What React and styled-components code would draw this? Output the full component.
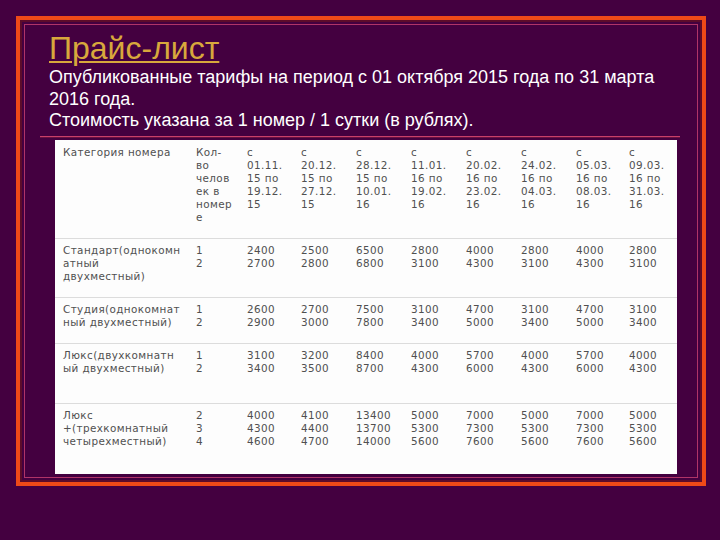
import styled, { createGlobalStyle } from 'styled-components';

const GlobalStyle = createGlobalStyle`
  html, body {
    margin: 0;
    padding: 0;
    background: #440040;
  }
  body {
    width: 720px;
    height: 540px;
    overflow: hidden;
    font-family: "Liberation Sans", Arial, sans-serif;
  }
`;

const Page = styled.div`
  padding: 16px 14px 0 16px;
`;

const Frame = styled.div`
  width: 682px;
  height: 462px;
  border: 4px solid #ee4a18;
`;

const FrameInner = styled.div`
  height: calc(100% - 8px);
  border: 2px solid #5c0c2a;
  padding: 2px;
`;

const FrameLine = styled.div`
  height: calc(100% - 2px);
  border: 1px solid #b03468;
  display: flex;
  flex-direction: column;
`;

const Title = styled.h1`
  margin: 6px 0 0 24px;
  font-size: 32px;
  font-weight: normal;
  line-height: 34px;
  color: #d8a83c;
  text-decoration: underline;
  text-decoration-thickness: 2px;
  text-underline-offset: 2px;
`;

const Intro = styled.p`
  margin: 2px 0 0 24px;
  font-size: 18px;
  line-height: 21.5px;
  color: #ffffff;
`;

const Divider = styled.div`
  margin: 4px 17px 0 15px;
  height: 1px;
  background: #c8406a;
  box-shadow: 0 1px 0 #6a1040;
`;

const Sheet = styled.div`
  margin: 3px 0 0 30px;
  width: 622px;
  height: 334px;
  background: #fdfdfd;
`;

const Table = styled.table`
  border-collapse: collapse;
  table-layout: fixed;
  width: 622px;
  font-family: "DejaVu Sans", "Open Sans", sans-serif;
  font-size: 10.4px;
  letter-spacing: 0.4px;
  color: #505050;
`;

const Cell = styled.td`
  vertical-align: top;
  padding: ${(p) => (p.$head ? '6px 0 0 0' : '5px 0 0 0')};
  padding-left: ${(p) => (p.$first ? '8px' : '0')};
  height: ${(p) => p.$h}px;
  box-sizing: border-box;
  white-space: nowrap;
`;

const Line = styled.div`
  height: 13px;
  line-height: 13px;
`;

const Row = styled.tr`
  border-bottom: ${(p) => (p.$last ? 'none' : '1px solid #dcdcdc')};
`;

const widths = [141, 51, 54, 55, 55, 55, 55, 55, 53, 48];

const periods = [
  ['01.11.', '15', '19.12.', '15'],
  ['20.12.', '15', '27.12.', '15'],
  ['28.12.', '15', '10.01.', '16'],
  ['11.01.', '16', '19.02.', '16'],
  ['20.02.', '16', '23.02.', '16'],
  ['24.02.', '16', '04.03.', '16'],
  ['05.03.', '16', '08.03.', '16'],
  ['09.03.', '16', '31.03.', '16'],
];

const rows = [
  {
    name: ['Стандарт(однокомн', 'атный', 'двухместный)'],
    h: 59,
    cols: [
      ['1', '2'],
      ['2400', '2700'],
      ['2500', '2800'],
      ['6500', '6800'],
      ['2800', '3100'],
      ['4000', '4300'],
      ['2800', '3100'],
      ['4000', '4300'],
      ['2800', '3100'],
    ],
  },
  {
    name: ['Студия(однокомнат', 'ный двухместный)'],
    h: 46,
    cols: [
      ['1', '2'],
      ['2600', '2900'],
      ['2700', '3000'],
      ['7500', '7800'],
      ['3100', '3400'],
      ['4700', '5000'],
      ['3100', '3400'],
      ['4700', '5000'],
      ['3100', '3400'],
    ],
  },
  {
    name: ['Люкс(двухкомнатн', 'ый двухместный)'],
    h: 60,
    cols: [
      ['1', '2'],
      ['3100', '3400'],
      ['3200', '3500'],
      ['8400', '8700'],
      ['4000', '4300'],
      ['5700', '6000'],
      ['4000', '4300'],
      ['5700', '6000'],
      ['4000', '4300'],
    ],
  },
  {
    name: ['Люкс', '+(трехкомнатный', 'четырехместный)'],
    h: 70,
    cols: [
      ['2', '3', '4'],
      ['4000', '4300', '4600'],
      ['4100', '4400', '4700'],
      ['13400', '13700', '14000'],
      ['5000', '5300', '5600'],
      ['7000', '7300', '7600'],
      ['5000', '5300', '5600'],
      ['7000', '7300', '7600'],
      ['5000', '5300', '5600'],
    ],
  },
];

const Lines = ({ items }) => items.map((t, i) => <Line key={i}>{t}</Line>);

const PriceTable = () => (
  <Table>
    <colgroup>
      {widths.map((w, i) => (
        <col key={i} style={{ width: w }} />
      ))}
    </colgroup>
    <tbody>
      <Row>
        <Cell $head $first $h={99}>
          <Line>Категория номера</Line>
        </Cell>
        <Cell $head $h={99}>
          <Lines items={['Кол-', 'во', 'челов', 'ек в', 'номер', 'е']} />
        </Cell>
        {periods.map(([from, y1, to, y2], i) => (
          <Cell $head $h={99} key={i}>
            <Lines items={['с', from, `${y1} по`, to, y2]} />
          </Cell>
        ))}
      </Row>
      {rows.map((r, ri) => (
        <Row key={ri} $last={ri === rows.length - 1}>
          <Cell $first $h={r.h}>
            <Lines items={r.name} />
          </Cell>
          {r.cols.map((c, ci) => (
            <Cell $h={r.h} key={ci}>
              <Lines items={c} />
            </Cell>
          ))}
        </Row>
      ))}
    </tbody>
  </Table>
);

export default function App() {
  return (
    <>
      <GlobalStyle />
      <Page>
        <Frame>
          <FrameInner>
            <FrameLine>
              <Title>Прайс-лист</Title>
              <Intro>
                Опубликованные тарифы на период с 01 октября 2015 года по 31 марта
                <br />
                2016 года.
                <br />
                Стоимость указана за 1 номер / 1 сутки (в рублях).
              </Intro>
              <Divider />
              <Sheet>
                <PriceTable />
              </Sheet>
            </FrameLine>
          </FrameInner>
        </Frame>
      </Page>
    </>
  );
}
